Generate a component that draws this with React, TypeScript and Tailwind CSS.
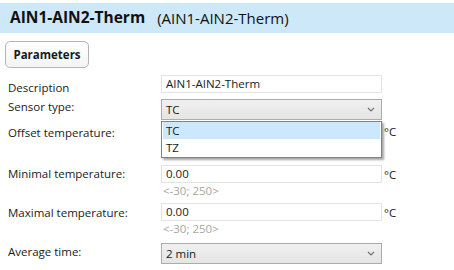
import React from "react";

const font = { fontFamily: '"Open Sans", "Noto Sans", Arial, sans-serif' };

function Chevron() {
  return (
    <svg width="8" height="5" viewBox="0 0 8 5" className="block">
      <path d="M1 1 L4 4 L7 1" fill="none" stroke="#6f6f6f" strokeWidth="1.1" />
    </svg>
  );
}

function Combo({ value }: { value: string }) {
  return (
    <div className="h-[21px] w-[221px] border border-[#acacac] bg-gradient-to-b from-[#f0f0f0] to-[#e5e5e5] flex items-center justify-between pl-[4px] pr-[6px] text-[11.5px] text-[#1a1a1a]">
      <span>{value}</span>
      <Chevron />
    </div>
  );
}

function Input({ value, hidden }: { value: string; hidden?: boolean }) {
  return (
    <div className={"h-[18px] w-[221px] border border-[#e3e3e3] bg-white flex items-center pl-[4px] text-[11.5px] text-[#1a1a1a]" + (hidden ? " invisible" : "")}>
      {value}
    </div>
  );
}

function Hint({ hidden }: { hidden?: boolean }) {
  return (
    <div className={"h-[16px] leading-[16px] text-[11.5px] text-[#a6a6a6] pl-[2px]" + (hidden ? " invisible" : "")}>
      &lt;-30; 250&gt;
    </div>
  );
}

function Row({
  h,
  label,
  labelPt,
  ctrlPt,
  unitPt,
  children,
}: {
  h: string;
  label: string;
  labelPt: string;
  ctrlPt: string;
  unitPt?: string;
  children: React.ReactNode;
}) {
  return (
    <div className={"flex " + h}>
      <div className={"w-[161px] pl-[8px] " + labelPt}>{label}</div>
      <div className={ctrlPt}>{children}</div>
      {unitPt && <div className={"pl-[2px] " + unitPt}>°C</div>}
    </div>
  );
}

export default function App() {
  return (
    <div className="w-[454px] h-[270px] bg-white relative overflow-hidden text-[#1a1a1a]" style={font}>
      <div className="h-[3px]" />
      <div className="h-[30px] bg-[#cde8f8] flex items-center pl-[10px] text-[#111]">
        <span className="font-bold text-[15.5px]">AIN1-AIN2-Therm</span>
        <span className="ml-[12px] text-[15px]">(AIN1-AIN2-Therm)</span>
      </div>
      <div className="pl-[5px] pt-[8px] h-[35px]">
        <div className="w-[84px] h-[27px] border border-[#b4b4b4] rounded-[5px] bg-gradient-to-b from-white to-[#f4f4f4] flex items-center justify-center text-[11.5px] font-bold">
          Parameters
        </div>
      </div>

      <div className="text-[11.5px] leading-[16px]">
        <Row h="h-[28px]" label="Description" labelPt="pt-[12px]" ctrlPt="pt-[7px]">
          <Input value="AIN1-AIN2-Therm" />
        </Row>
        <Row h="h-[24px]" label="Sensor type:" labelPt="pt-[3px]" ctrlPt="pt-[3px]">
          <Combo value="TC" />
        </Row>
        <Row h="h-[41px]" label="Offset temperature:" labelPt="pt-[5px]" ctrlPt="pt-[5px]" unitPt="pt-[4px]">
          <Input value="0.00" hidden />
          <Hint hidden />
        </Row>
        <Row h="h-[38px]" label="Minimal temperature:" labelPt="pt-[5px]" ctrlPt="pt-[4px]" unitPt="pt-[6px]">
          <Input value="0.00" />
          <Hint />
        </Row>
        <Row h="h-[38px]" label="Maximal temperature:" labelPt="pt-[6px]" ctrlPt="pt-[4px]" unitPt="pt-[6px]">
          <Input value="0.00" />
          <Hint />
        </Row>
        <Row h="h-[33px]" label="Average time:" labelPt="pt-[7px]" ctrlPt="pt-[6px]">
          <Combo value="2 min" />
        </Row>
      </div>

      {/* Dropdown popup */}
      <div className="absolute left-[161px] top-[121px] w-[221px] h-[37px] border border-[#828282] bg-white shadow-[2px_2px_2px_rgba(0,0,0,0.35)] text-[11.5px] leading-[17px]">
        <div className="h-[17px] bg-[#cce8ff] pl-[3px] mx-[1px]">TC</div>
        <div className="h-[18px] pl-[4px] leading-[18px]">TZ</div>
      </div>
    </div>
  );
}
